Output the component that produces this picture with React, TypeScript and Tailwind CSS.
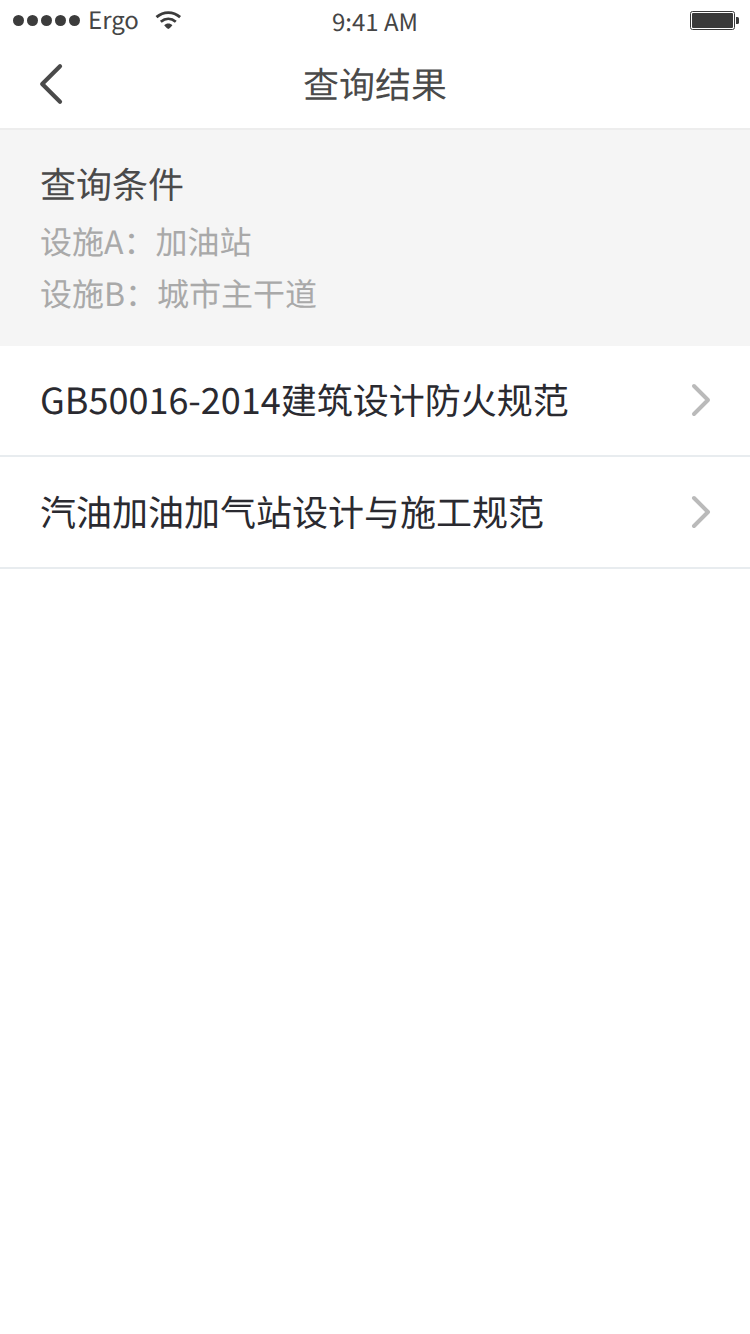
import React from "react";

const font = "font-['Noto_Sans_CJK_SC','Noto_Sans',sans-serif]";
const statusFill = "#3c3c3c";

const conditions = ["设施A：加油站", "设施B：城市主干道"];
const results = ["GB50016-2014建筑设计防火规范", "汽油加油加气站设计与施工规范"];

function Chevron() {
  return (
    <svg className="h-9 w-6 shrink-0" viewBox="0 0 24 36" fill="none">
      <path d="M6 4L20 18L6 32" stroke="#bababa" strokeWidth="4" strokeLinecap="round" strokeLinejoin="round" />
    </svg>
  );
}

function StatusBar() {
  return (
    <div className="grid h-10 grid-cols-3 items-center text-[#454545]">
      <div className="flex items-center pl-[13px]">
        <div className="flex gap-[3px]">
          {[0, 1, 2, 3, 4].map((i) => (
            <span key={i} className="size-[11px] rounded-full bg-[#3c3c3c]" />
          ))}
        </div>
        <span className="-mt-0.5 ml-2 text-[24px] leading-9">Ergo</span>
        <svg className="ml-4 h-[19px] w-[27px]" viewBox="0 0 27 19" fill="none" stroke={statusFill}>
          <path d="M1.5 6.1C8.5 0 18.1 0 25.1 6.1" strokeWidth="2.8" />
          <path d="M5.8 10.8C10.4 6.9 16.2 6.9 20.8 10.8" strokeWidth="2.8" />
          <path d="M9.2 14.3C11.4 12 15.2 12 17.4 14.3Q15 17.4 13.3 18Q11.6 17.4 9.2 14.3Z" fill={statusFill} stroke="none" />
        </svg>
      </div>
      <span className="pt-0.5 text-center text-[24px] leading-9">9:41 AM</span>
      <svg className="mr-[10px] mt-0.5 h-5 w-[50px] justify-self-end" viewBox="0 0 50 20">
        <rect x="0.5" y="0.5" width="44" height="18" rx="2" fill="none" stroke="#3a3a3a" />
        <rect x="2" y="2" width="41" height="15" rx="1" fill="#3a3a3a" />
        <path d="M46 6h1.5q1.5 0 1.5 1.5v4q0 1.5-1.5 1.5h-1.5z" fill="#3a3a3a" />
      </svg>
    </div>
  );
}

export default function App() {
  return (
    <div className={`flex h-[1334px] w-[750px] flex-col bg-white [text-rendering:geometricPrecision] ${font}`}>
      <StatusBar />
      <header className="grid h-[90px] grid-cols-3 items-center border-b-2 border-[#ededed]">
        <svg className="ml-[38px] h-11 w-7" viewBox="0 0 28 44" fill="none">
          <path d="M22 4.2L4.2 22L22 39.8" stroke="#4a4a4a" strokeWidth="4.2" strokeLinecap="round" strokeLinejoin="round" />
        </svg>
        <h1 className="-mt-0.5 text-center text-[36px] leading-[52px] text-[#4a4a4a]">查询结果</h1>
      </header>
      <section className="h-[216px] bg-[#f5f5f5] pl-10 pt-[27px]">
        <h2 className="text-[36px] leading-[52px] text-[#4a4a4a]">查询条件</h2>
        <div className="mt-1.5 text-[32px] leading-[52px] text-[#a9a9a9]">
          {conditions.map((c) => (
            <p key={c}>{c}</p>
          ))}
        </div>
      </section>
      <ul className="-mt-px">
        {results.map((t) => (
          <li key={t} className="flex h-28 items-center justify-between border-b-2 border-[#e8ecef] pl-10 pr-[38px] text-[36px] leading-[52px] text-[#2a2a30]">
            <span className="-mt-0.5">{t}</span>
            <Chevron />
          </li>
        ))}
      </ul>
    </div>
  );
}
